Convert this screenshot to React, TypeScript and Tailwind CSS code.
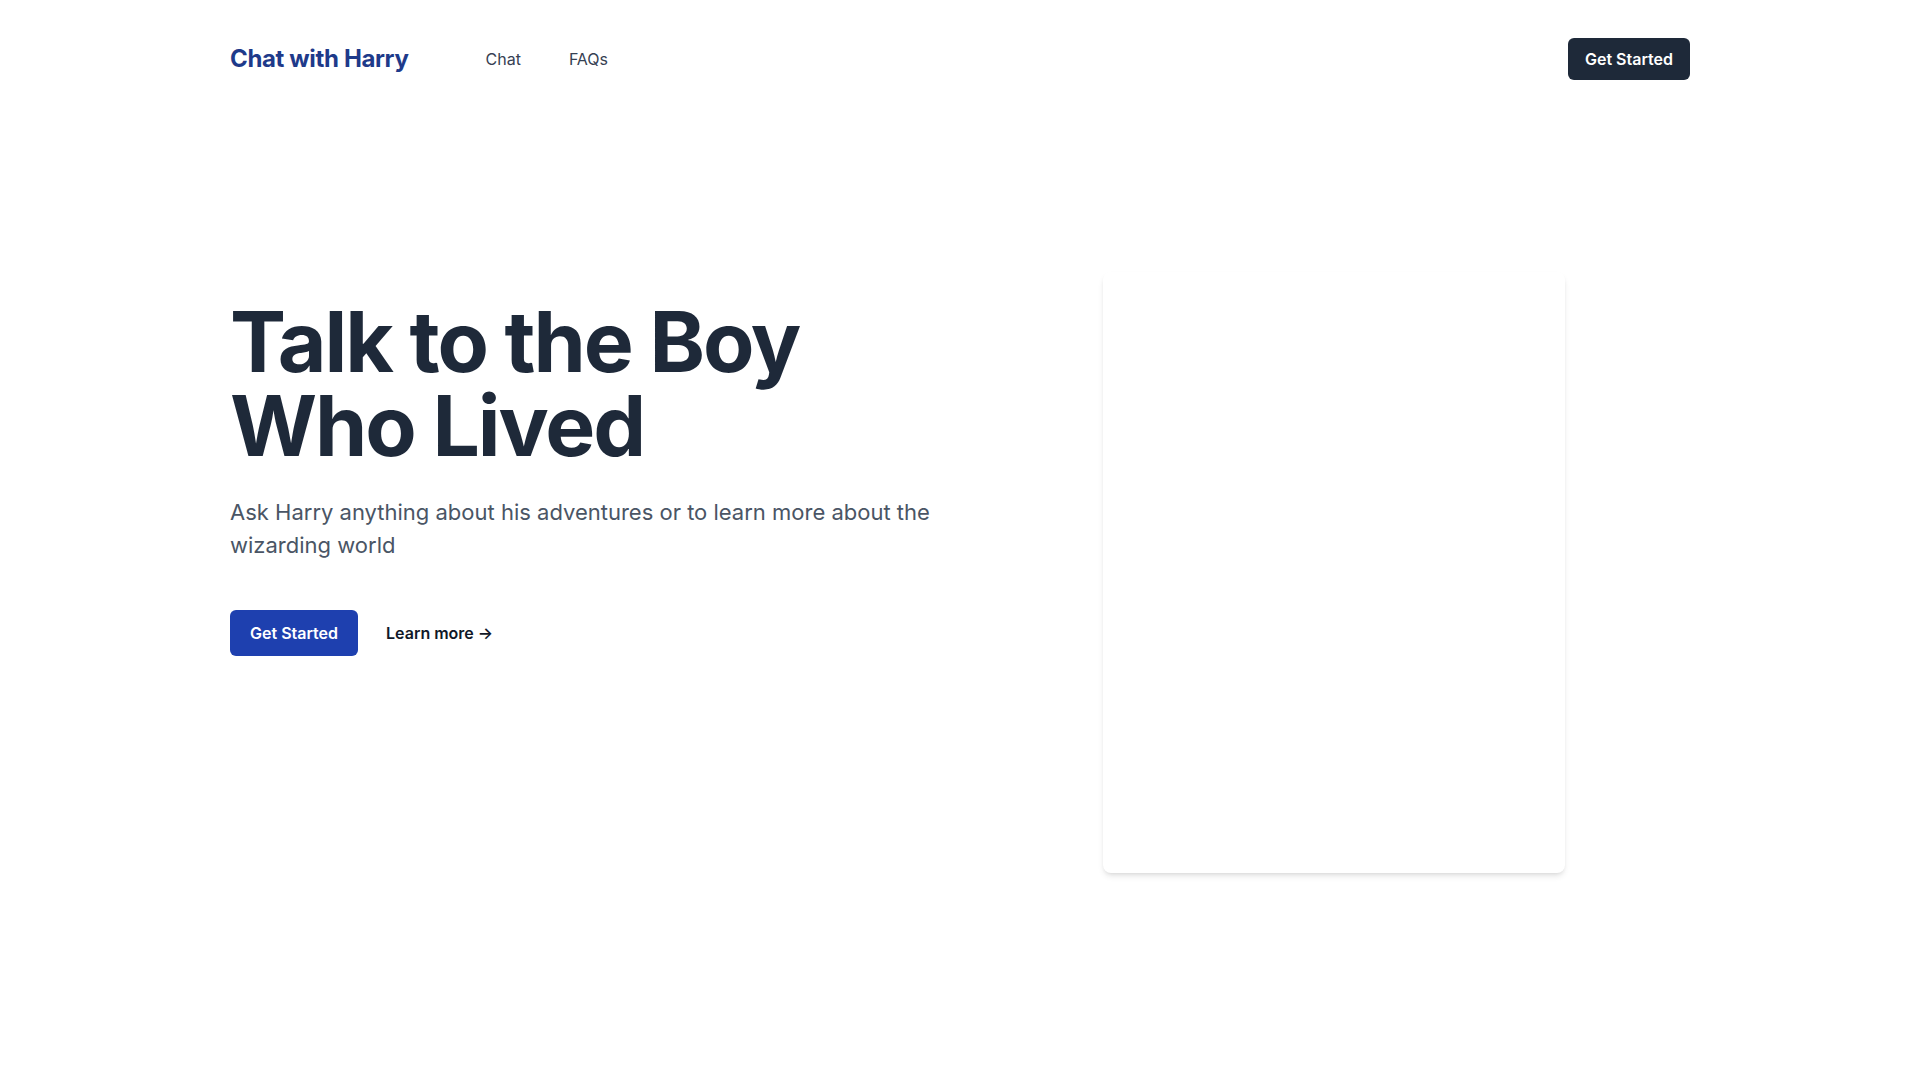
export default function App() {
  return (
    <div className="min-h-screen bg-white font-['Inter',sans-serif] text-gray-800">
      <header className="flex items-center justify-between px-[230px] pt-[38px]">
        <div className="flex items-center">
          <a href="#" className="text-[24px] font-bold tracking-[-0.015em] text-[#1e3a8a]">
            Chat with Harry
          </a>
          <nav className="ml-[77px] flex items-center gap-12 text-base text-gray-700">
            <a href="#">Chat</a>
            <a href="#">FAQs</a>
          </nav>
        </div>
        <button
          type="button"
          className="h-[42px] rounded-md bg-gray-800 px-[17px] text-base font-semibold text-white"
        >
          Get Started
        </button>
      </header>

      <main className="flex items-start justify-between pl-[230px] pr-[355px] pt-[192px]">
        <div className="pt-[28px]">
          <h1 className="text-[84px] font-bold leading-none tracking-tight text-gray-800">
            Talk to the Boy
            <br />
            Who Lived
          </h1>
          <p className="mt-7 max-w-[720px] text-[22px] leading-[33px] text-gray-600">
            Ask Harry anything about his adventures or to learn more about the wizarding world
          </p>
          <div className="mt-12 flex items-center gap-7">
            <button
              type="button"
              className="h-[46px] rounded-md bg-[#1e40af] px-5 text-base font-semibold text-white"
            >
              Get Started
            </button>
            <a href="#" className="text-base font-semibold text-gray-900">
              Learn more →
            </a>
          </div>
        </div>

        <div className="h-[601px] w-[462px] rounded-lg bg-white shadow-md" />
      </main>
    </div>
  );
}
